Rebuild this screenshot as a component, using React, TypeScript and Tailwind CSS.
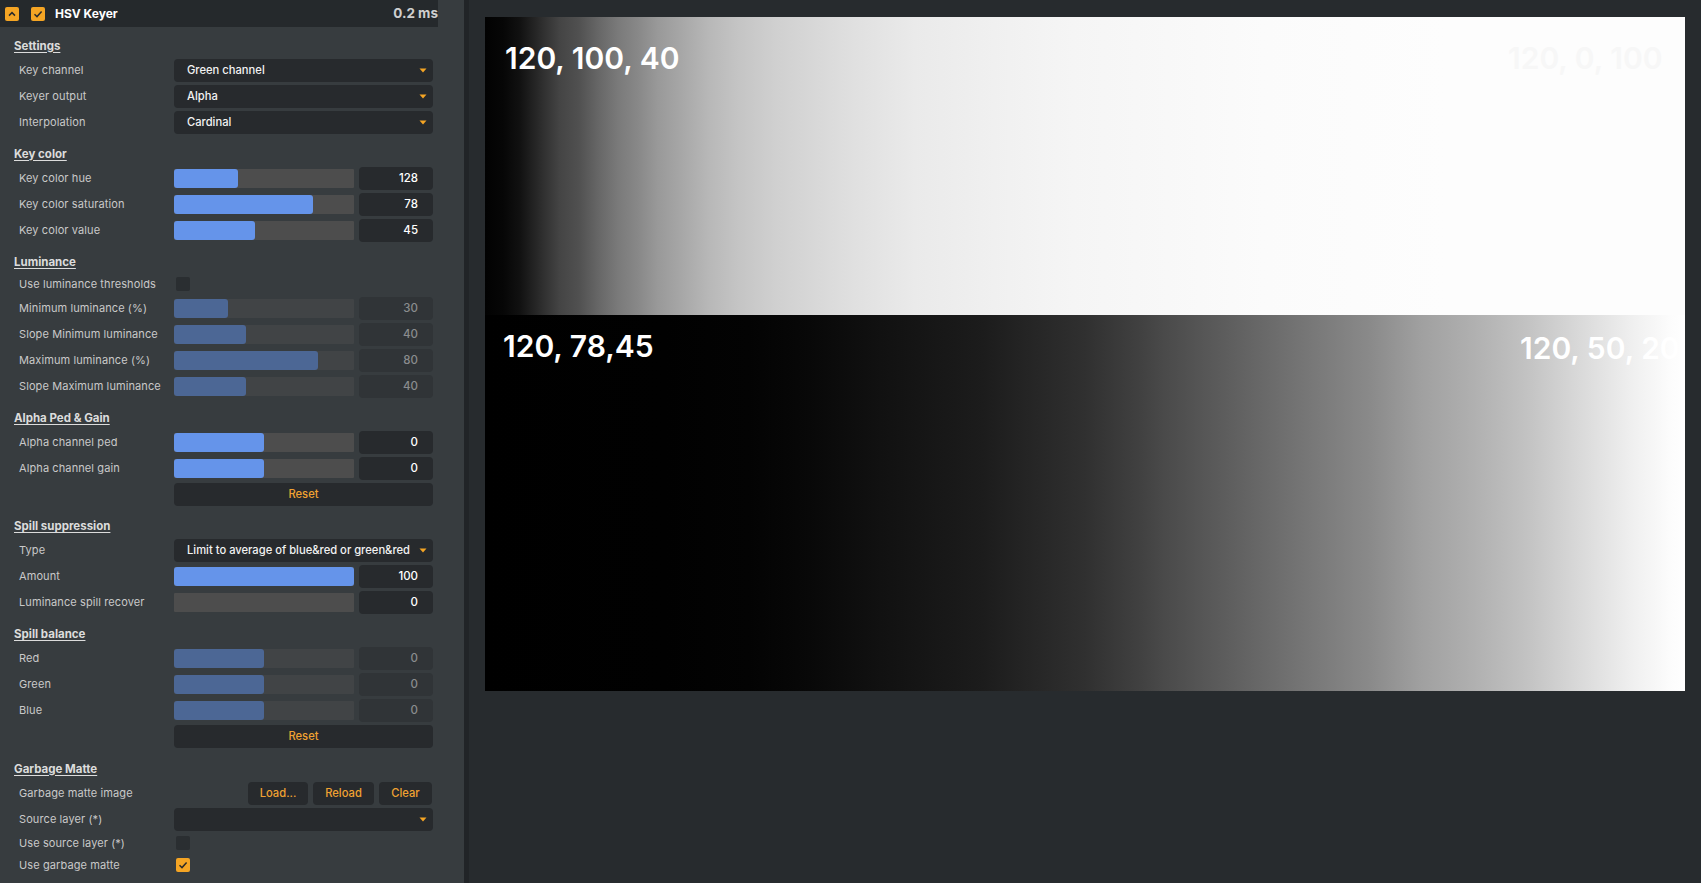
import type { ReactNode } from 'react';

type SliderRow = { label: string; value: string; fill: number; disabled?: boolean };

const keyColor: SliderRow[] = [
  { label: 'Key color hue', value: '128', fill: 64 },
  { label: 'Key color saturation', value: '78', fill: 139 },
  { label: 'Key color value', value: '45', fill: 81 },
];

const luminance: SliderRow[] = [
  { label: 'Minimum luminance (%)', value: '30', fill: 54, disabled: true },
  { label: 'Slope Minimum luminance', value: '40', fill: 72, disabled: true },
  { label: 'Maximum luminance (%)', value: '80', fill: 144, disabled: true },
  { label: 'Slope Maximum luminance', value: '40', fill: 72, disabled: true },
];

const alphaPed: SliderRow[] = [
  { label: 'Alpha channel ped', value: '0', fill: 90 },
  { label: 'Alpha channel gain', value: '0', fill: 90 },
];

const spillBalance: SliderRow[] = [
  { label: 'Red', value: '0', fill: 90, disabled: true },
  { label: 'Green', value: '0', fill: 90, disabled: true },
  { label: 'Blue', value: '0', fill: 90, disabled: true },
];

function Section({ title }: { title: string }) {
  return (
    <div className="mt-[8px] flex h-[22px] items-center pl-[14px] pt-[1px] text-[11.5px] font-bold text-[#dcdcdc] underline underline-offset-2">
      {title}
    </div>
  );
}

function Row({ label, children, small }: { label: string; children?: ReactNode; small?: boolean }) {
  return (
    <div className={`flex items-center pl-[19px] ${small ? 'h-[22px]' : 'h-[26px]'}`}>
      <div className="w-[155px] shrink-0 text-[11px] tracking-[0.1px] text-[#c9c9c9]">{label}</div>
      {children}
    </div>
  );
}

function Arrow() {
  return (
    <svg width="8" height="5" viewBox="0 0 8 5" className="shrink-0">
      <path d="M0.5 0.5 L7.5 0.5 L4 4.5 Z" fill="#f5a524" />
    </svg>
  );
}

function Combo({ text }: { text: string }) {
  return (
    <div className="flex h-[23px] w-[259px] items-center justify-between rounded-[4px] bg-[#272a2d] pl-[13px] pr-[6px] text-[11.2px] font-medium text-[#f2f2f2]">
      <span>{text}</span>
      <Arrow />
    </div>
  );
}

function Slider({ row }: { row: SliderRow }) {
  const d = row.disabled;
  return (
    <Row label={row.label}>
      <div className={`h-[19px] w-[180px] rounded-[1px] ${d ? 'bg-[#414446]' : 'bg-[#4d4d4d]'}`}>
        <div
          className={`h-full rounded-[3px] ${d ? 'bg-[#4c6795]' : 'bg-[#6594ea]'}`}
          style={{ width: `${row.fill}px` }}
        />
      </div>
      <div
        className={`ml-[5px] flex h-[23px] w-[74px] items-center justify-end rounded-[4px] pr-[15px] pt-[2px] text-[11.5px] font-medium ${
          d ? 'bg-[#303437] text-[#8a8c8e]' : 'bg-[#272a2d] text-white'
        }`}
      >
        {row.value}
      </div>
    </Row>
  );
}

function Check({ on }: { on?: boolean }) {
  return on ? (
    <div className="ml-[2px] flex h-[14px] w-[14px] items-center justify-center rounded-[2px] bg-[#f5a524]">
      <svg width="14" height="14" viewBox="0 0 14 14">
        <path d="M3.5 7.3 L6 9.6 L10.6 4.6" fill="none" stroke="#2b2b2b" strokeWidth="1.5" />
      </svg>
    </div>
  ) : (
    <div className="ml-[2px] h-[14px] w-[14px] rounded-[2px] bg-[#2a2e31]" />
  );
}

function Button({ text, w }: { text: string; w: string }) {
  return (
    <div className={`flex h-[23px] ${w} items-center justify-center rounded-[4px] bg-[#272a2d] text-[11.2px] font-medium text-[#f0a232]`}>
      {text}
    </div>
  );
}

function Panel() {
  return (
    <div className="h-full w-[464px] shrink-0 bg-[#373c3f]">
      <div className="flex h-[27px] w-[438px] items-center bg-[#25292c] pl-[5px]">
        <div className="flex h-[14px] w-[14px] items-center justify-center rounded-[2px] bg-[#f5a524]">
          <svg width="14" height="14" viewBox="0 0 14 14">
            <path d="M4 8.6 L7 5.6 L10 8.6" fill="none" stroke="#2b2b2b" strokeWidth="1.5" />
          </svg>
        </div>
        <div className="ml-[12px] flex h-[14px] w-[14px] items-center justify-center rounded-[2px] bg-[#f5a524]">
          <svg width="14" height="14" viewBox="0 0 14 14">
            <path d="M3.5 7.3 L6 9.6 L10.6 4.6" fill="none" stroke="#2b2b2b" strokeWidth="1.5" />
          </svg>
        </div>
        <span className="ml-[10px] text-[12px] font-bold text-white">HSV Keyer</span>
        <span className="ml-auto text-[13.5px] font-bold text-[#cfcfcf]">0.2 ms</span>
      </div>

      <Section title="Settings" />
      <Row label="Key channel"><Combo text="Green channel" /></Row>
      <Row label="Keyer output"><Combo text="Alpha" /></Row>
      <Row label="Interpolation"><Combo text="Cardinal" /></Row>

      <Section title="Key color" />
      {keyColor.map((r) => <Slider key={r.label} row={r} />)}

      <Section title="Luminance" />
      <Row label="Use luminance thresholds" small><Check /></Row>
      {luminance.map((r) => <Slider key={r.label} row={r} />)}

      <Section title="Alpha Ped & Gain" />
      {alphaPed.map((r) => <Slider key={r.label} row={r} />)}
      <Row label=""><Button text="Reset" w="w-[259px]" /></Row>

      <Section title="Spill suppression" />
      <Row label="Type"><Combo text="Limit to average of blue&red or green&red" /></Row>
      <Slider row={{ label: 'Amount', value: '100', fill: 180 }} />
      <Slider row={{ label: 'Luminance spill recover', value: '0', fill: 0 }} />

      <Section title="Spill balance" />
      {spillBalance.map((r) => <Slider key={r.label} row={r} />)}
      <Row label=""><Button text="Reset" w="w-[259px]" /></Row>

      <div className="h-[1px]" />
      <Section title="Garbage Matte" />
      <Row label="Garbage matte image">
        <div className="flex w-[259px] justify-end gap-[5px] pr-[1px]">
          <Button text="Load..." w="w-[60px]" />
          <Button text="Reload" w="w-[61px]" />
          <Button text="Clear" w="w-[53px]" />
        </div>
      </Row>
      <Row label="Source layer (*)"><Combo text="" /></Row>
      <Row label="Use source layer (*)" small><Check /></Row>
      <Row label="Use garbage matte" small><Check on /></Row>
    </div>
  );
}

function Viewer() {
  return (
    <div className="flex-1 pl-[16px] pr-[16px] pt-[17px]">
      <div className="flex h-[674px] w-full flex-col">
        <div className="relative h-[298px] w-full bg-[linear-gradient(to_right,#020202_0%,#060606_1.5%,#111111_2.9%,#2a2a2a_4.5%,#444444_6.2%,#505050_7.8%,#666666_9.4%,#7a7a7a_11.1%,#888888_12.75%,#999999_14.4%,#a5a5a5_16.1%,#b8b8b8_18.7%,#c4c4c4_21%,#d0d0d0_24.25%,#d8d8d8_27.6%,#e0e0e0_30.8%,#eaeaea_35.8%,#f0f0f0_42.4%,#f5f5f5_49%,#fbfbfb_65%,#fdfdfd_80%,#fdfdfd_100%)]">
          <span className="absolute left-[20px] top-[26px] text-[30px] leading-[30px] font-semibold text-white">120, 100, 40</span>
          <span className="absolute left-[1023px] top-[26px] text-[30px] leading-[30px] font-semibold text-[#f7f7f7]">120, 0, 100</span>
        </div>
        <div className="relative h-[376px] w-full bg-[linear-gradient(to_right,#000000_0%,#010101_15%,#030303_22%,#080808_27%,#111111_33%,#1c1c1c_41.5%,#262626_45.8%,#303030_50%,#404040_54.4%,#4a4a4a_56.6%,#5a5a5a_60.9%,#6a6a6a_65.2%,#7a7a7a_69.5%,#8a8a8a_73.8%,#a0a0a0_78%,#b0b0b0_82.4%,#c2c2c2_86.75%,#d8d8d8_91%,#eeeeee_95.3%,#fcfcfc_98.75%,#ffffff_100%)]">
          <span className="absolute left-[18px] top-[16px] text-[30px] leading-[30px] font-semibold text-white">120, 78,45</span>
          <span className="absolute left-[1035px] top-[18px] text-[30px] leading-[30px] font-semibold text-white">120, 50, 20</span>
        </div>
      </div>
    </div>
  );
}

export default function App() {
  return (
    <div className="flex h-[883px] w-full overflow-hidden bg-[#272b2e] font-['Inter','Noto_Sans',sans-serif]">
      <Panel />
      <div className="h-full w-[5px] shrink-0 bg-[#212427]" />
      <Viewer />
    </div>
  );
}
